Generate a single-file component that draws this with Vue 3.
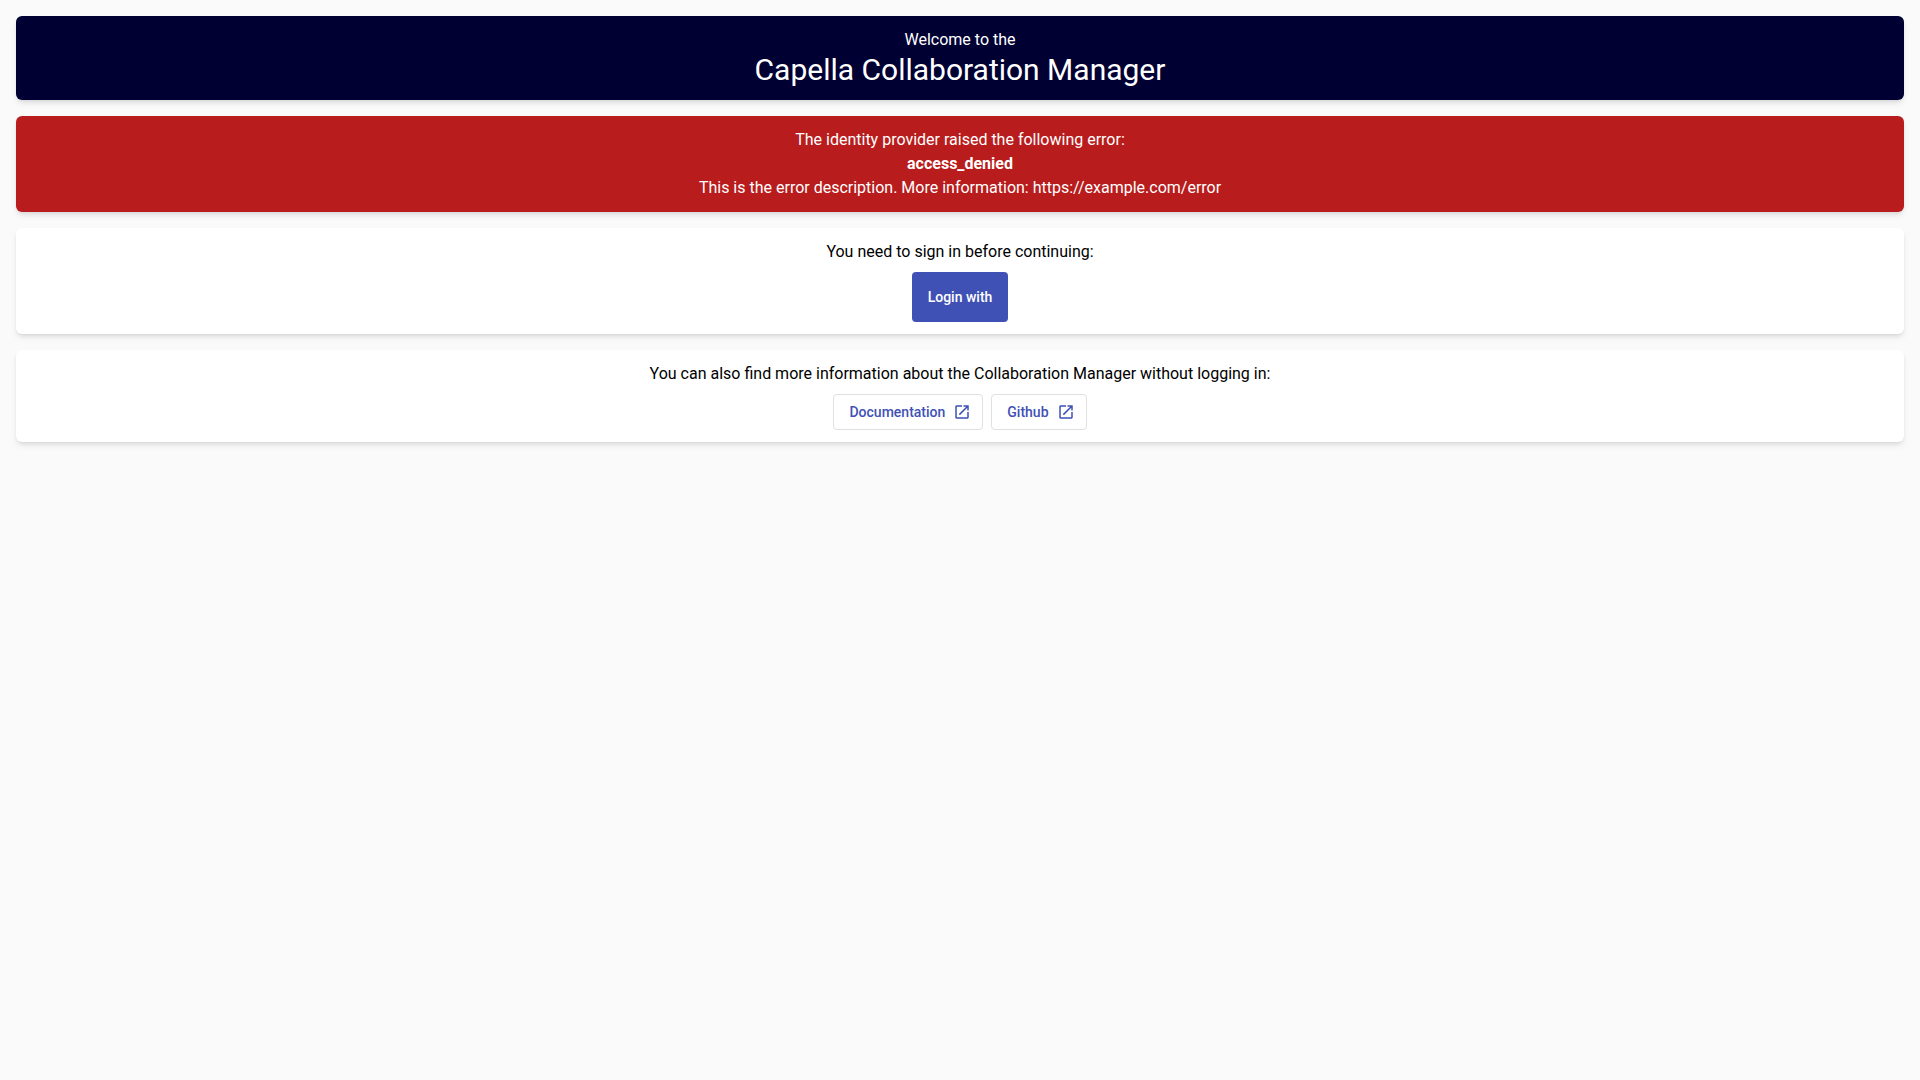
<script setup>
const links = [
  { label: 'Documentation', href: '#documentation' },
  { label: 'Github', href: '#github' },
]
</script>

<template>
  <main class="login">
    <header class="card card-primary">
      <div>Welcome to the</div>
      <h1>Capella Collaboration Manager</h1>
    </header>

    <section class="card card-error" role="alert">
      <div>The identity provider raised the following error:</div>
      <strong>access_denied</strong>
      <div>This is the error description. More information: https://example.com/error</div>
    </section>

    <section class="card">
      <div>You need to sign in before continuing:</div>
      <button class="login-button" type="button">Login with</button>
    </section>

    <section class="card">
      <div>You can also find more information about the Collaboration Manager without logging in:</div>
      <nav class="links">
        <a v-for="link in links" :key="link.label" class="link-button" :href="link.href">
          {{ link.label }}
          <svg class="icon" viewBox="0 0 24 24" aria-hidden="true">
            <path
              d="M19 19H5V5h7V3H5c-1.11 0-2 .9-2 2v14c0 1.1.89 2 2 2h14c1.1 0 2-.9 2-2v-7h-2v7zM14 3v2h3.59l-9.83 9.83 1.41 1.41L19 6.41V10h2V3h-7z"
            />
          </svg>
        </a>
      </nav>
    </section>
  </main>
</template>

<style>
body {
  margin: 0;
  background: #fafafa;
}
</style>

<style scoped>
.login {
  display: flex;
  flex-direction: column;
  gap: 16px;
  padding: 16px;
  font-family: Roboto, 'Liberation Sans', sans-serif;
  font-size: 16px;
  line-height: 24px;
  color: #000;
}

.card {
  display: flex;
  flex-direction: column;
  align-items: center;
  padding: 12px;
  border-radius: 6px;
  background: #fff;
  text-align: center;
  box-shadow:
    0 4px 6px -1px rgba(0, 0, 0, 0.1),
    0 2px 4px -2px rgba(0, 0, 0, 0.1);
}

.card-primary {
  background: #000033;
  color: #fff;
}

.card-error {
  background: #b91c1c;
  color: #fff;
}

h1 {
  margin: 0;
  font-size: 30px;
  font-weight: 400;
  line-height: 36px;
}

strong {
  font-weight: 700;
}

.login-button {
  height: 50px;
  margin-top: 8px;
  padding: 0 16px;
  border: 0;
  border-radius: 4px;
  background: #3f51b5;
  color: #fff;
  font-family: inherit;
  font-size: 14px;
  font-weight: 500;
  cursor: pointer;
}

.links {
  display: flex;
  flex-wrap: wrap;
  justify-content: center;
  gap: 8px;
  margin-top: 8px;
}

.link-button {
  display: flex;
  align-items: center;
  gap: 8px;
  box-sizing: border-box;
  height: 36px;
  padding: 0 11px 0 15px;
  border: 1px solid #e0e0e0;
  border-radius: 4px;
  color: #3f51b5;
  font-size: 14px;
  font-weight: 500;
  text-decoration: none;
}

.icon {
  width: 18px;
  height: 18px;
  fill: currentColor;
}
</style>
